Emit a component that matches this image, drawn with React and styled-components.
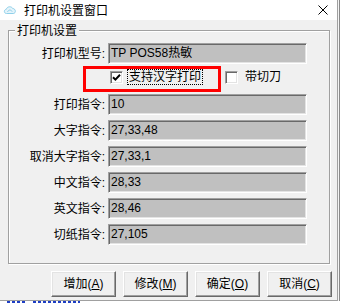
import React from "react";
import styled, { createGlobalStyle } from "styled-components";

const GlobalStyle = createGlobalStyle`
  html, body { margin: 0; padding: 0; background: #fff; }
  body {
    font-family: "Liberation Sans", "Noto Sans CJK SC", sans-serif;
    font-size: 12px;
    color: #000;
  }
  * { box-sizing: border-box; }
`;

const Screen = styled.div`
  width: 340px;
  height: 303px;
  display: flex;
  flex-direction: column;
  overflow: hidden;
  background: #fff;
`;

const Upper = styled.div`
  display: flex;
  height: 301px;
`;

const Window = styled.div`
  width: 338px;
  height: 301px;
  display: flex;
  flex-direction: column;
  background: #f0f0f0;
  border-right: 1px solid #a0a0a0;
  border-bottom: 1px solid #a0a0a0;
`;

const SideStrip = styled.div`
  width: 2px;
  background: linear-gradient(90deg, #f4f4f4 1px, #8a8a8a 1px);
`;

const BottomStrip = styled.div`
  height: 2px;
  display: flex;
  gap: 6px;
  padding-left: 7px;
`;

const BlueDots = styled.div`
  width: ${(p) => p.$w}px;
  height: 2px;
  background: repeating-linear-gradient(90deg, #1f3fc4 0 3px, transparent 3px 5px);
`;

const TitleBar = styled.div`
  height: 20px;
  background: #fff;
  display: flex;
  align-items: center;
  padding-left: 3px;
`;

const TitleText = styled.span`
  font-family: "Noto Sans CJK SC", sans-serif;
  font-size: 12px;
  line-height: 14px;
  margin-left: 7px;
  flex: 1;
`;

const CloseIcon = styled.svg`
  margin-right: 9px;
`;

const Body = styled.div`
  flex: 1;
  display: flex;
  flex-direction: column;
  padding-top: 10px;
`;

const GroupBox = styled.div`
  position: relative;
  margin-left: 8px;
  width: 322px;
  height: 234px;
  border: 1px solid #a0a0a0;
  box-shadow: inset 1px 1px 0 #fff, 1px 1px 0 #fff;
  padding-top: 12px;
  display: flex;
  flex-direction: column;
`;

const Legend = styled.span`
  position: absolute;
  top: -8px;
  left: 6px;
  padding: 0 2px;
  background: #f0f0f0;
  font-family: "Noto Sans CJK SC", sans-serif;
  line-height: 14px;
`;

const FieldRow = styled.div`
  display: flex;
  align-items: center;
  height: 21px;
  margin-bottom: ${(p) => p.$gap ?? 5}px;
`;

const FieldLabel = styled.span`
  width: 96px;
  text-align: right;
  line-height: 14px;
  margin-right: 3px;
  white-space: nowrap;
`;

const FieldBox = styled.div`
  width: 199px;
  height: 21px;
  background: #c0c0c0;
  border: 1px solid;
  border-color: #a0a0a0 #ffffff #ffffff #a0a0a0;
  box-shadow: inset 1px 1px 0 #696969, inset -1px -1px 0 #e3e3e3;
  padding-left: 2px;
  display: flex;
  align-items: center;
  line-height: 14px;
  padding-bottom: 1px;
  white-space: nowrap;
`;

const CheckRow = styled.div`
  display: flex;
  align-items: flex-start;
  height: 26px;
  margin: 2px 0 2px;
  padding-left: 74px;
`;

const RedFrame = styled.div`
  height: 26px;
  border: 3px solid #ff0000;
  display: flex;
  align-items: center;
  padding: 0 15px 4px 24px;
`;

const CheckOption = styled.div`
  display: flex;
  align-items: center;
  height: 22px;
  margin-left: 4px;
`;

const Box = styled.span`
  width: 13px;
  height: 13px;
  background: #fff;
  border: 1px solid;
  border-color: #a0a0a0 #ffffff #ffffff #a0a0a0;
  box-shadow: inset 1px 1px 0 #696969, inset -1px -1px 0 #e3e3e3;
  display: flex;
  align-items: center;
  justify-content: center;
  margin-right: ${(p) => p.$gap}px;
`;

const OptionText = styled.span`
  line-height: 14px;
  padding: 0 1px;
  border: 1px dotted ${(p) => (p.$focus ? "#000" : "transparent")};
  white-space: nowrap;
`;

const ButtonRow = styled.div`
  display: flex;
  gap: 7px;
  margin-top: 7px;
  padding-left: 51px;
`;

const Button = styled.div`
  width: 65px;
  height: 26px;
  background: #f0f0f0;
  border: 1px solid;
  border-color: #ffffff #696969 #696969 #ffffff;
  box-shadow: inset -1px -1px 0 #a0a0a0, inset 1px 1px 0 #e3e3e3;
  display: flex;
  align-items: center;
  justify-content: center;
  line-height: 14px;
  white-space: nowrap;
`;

const Mnemonic = styled.span`
  text-decoration: underline;
`;

const fields = [
  ["打印指令:", "10"],
  ["大字指令:", "27,33,48"],
  ["取消大字指令:", "27,33,1"],
  ["中文指令:", "28,33"],
  ["英文指令:", "28,46"],
  ["切纸指令:", "27,105"],
];

const buttons = [
  ["增加", "A"],
  ["修改", "M"],
  ["确定", "O"],
  ["取消", "C"],
];

function AppIcon() {
  return (
    <svg width="14" height="10" viewBox="0 0 14 10">
      <path
        d="M3.5 8.5 C0.8 8.5 0.6 4.6 3.4 4.2 C4 1.2 8.6 1 9.8 3.6 C12.8 3.4 13.4 8.5 10.2 8.5 Z"
        fill="#e4f4fb"
        stroke="#8fd0ea"
        strokeWidth="1"
      />
      <path d="M4.5 7 C5.5 4.5 8 4.5 9.2 6.6" fill="none" stroke="#8fd0ea" strokeWidth="1" />
    </svg>
  );
}

function CheckMark() {
  return (
    <svg width="9" height="9" viewBox="0 0 9 9">
      <path d="M1 4.2 L3.4 6.6 L8 1.8" fill="none" stroke="#000" strokeWidth="2" />
    </svg>
  );
}

export default function App() {
  return (
    <>
      <GlobalStyle />
      <Screen>
        <Upper>
          <Window>
            <TitleBar>
              <AppIcon />
              <TitleText>打印机设置窗口</TitleText>
              <CloseIcon width="10" height="10" viewBox="0 0 10 10">
                <path d="M0.5 0.5 L9.5 9.5 M9.5 0.5 L0.5 9.5" stroke="#000" strokeWidth="1" />
              </CloseIcon>
            </TitleBar>
            <Body>
              <GroupBox>
                <Legend>打印机设置</Legend>
                <FieldRow $gap={0}>
                  <FieldLabel>打印机型号:</FieldLabel>
                  <FieldBox>TP POS58热敏</FieldBox>
                </FieldRow>
                <CheckRow>
                  <RedFrame>
                    <Box $gap={4}>
                      <CheckMark />
                    </Box>
                    <OptionText $focus>支持汉字打印</OptionText>
                  </RedFrame>
                  <CheckOption>
                    <Box $gap={5} />
                    <OptionText>带切刀</OptionText>
                  </CheckOption>
                </CheckRow>
                {fields.map(([label, value]) => (
                  <FieldRow key={label}>
                    <FieldLabel>{label}</FieldLabel>
                    <FieldBox>{value}</FieldBox>
                  </FieldRow>
                ))}
              </GroupBox>
              <ButtonRow>
                {buttons.map(([text, key]) => (
                  <Button key={key}>
                    {text}(<Mnemonic>{key}</Mnemonic>)
                  </Button>
                ))}
              </ButtonRow>
            </Body>
          </Window>
          <SideStrip />
        </Upper>
        <BottomStrip>
          <BlueDots $w={20} />
          <BlueDots $w={47} />
        </BottomStrip>
      </Screen>
    </>
  );
}
